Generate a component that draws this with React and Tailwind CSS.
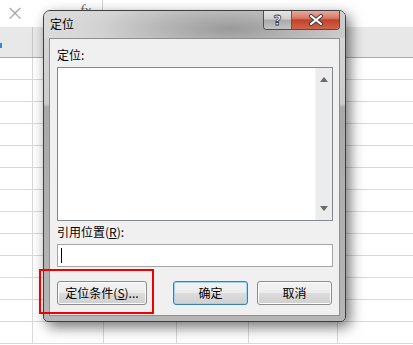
import React from 'react';

const cols = [33, 71, 73, 72, 89];
const rows = Array.from({ length: 13 });

function Sheet() {
  return (
    <div className="flex flex-col">
      {/* formula bar */}
      <div className="flex h-[27px] bg-white">
        <div className="flex w-[103px] items-start border-r border-[#d4d4d4] pl-[6px] text-[#a6a6a6]">
          <span className="mt-[3px] text-[18px] leading-none">×</span>
          <span className="ml-[56px] mt-[3px] font-['Liberation_Serif',serif] text-[15px] italic leading-none text-[#6a6a6a]">fx</span>
        </div>
        <div className="flex-1" />
      </div>
      {/* column header */}
      <div className="flex h-[31px] border-b border-[#ababab] bg-[#e8e8e8]">
        <div className="relative w-[33px] border-r border-[#c8c8c8]">
          <div className="absolute left-0 top-[16px] h-[5px] w-[2px] bg-[#2f8ad8]" />
        </div>
        <div className="flex-1" />
      </div>
      {rows.map((_, i) => (
        <div key={i} className="flex h-[22px] border-b border-[#d9d9d9] bg-white">
          {cols.map((w, j) => (
            <div key={j} className="shrink-0 border-r border-[#d9d9d9]" style={{ width: w }} />
          ))}
          <div className="flex-1" />
        </div>
      ))}
    </div>
  );
}

function WinButton({ children, width, focused, className = '' }) {
  return (
    <div
      className={
        'flex h-[24px] items-center justify-center rounded-[3px] border bg-[linear-gradient(180deg,#f3f3f3_0%,#ebebeb_50%,#dddddd_50%,#d0d0d0_100%)] text-[12px] leading-none text-black ' +
        (focused
          ? 'border-[#3c7fb1] shadow-[inset_0_0_0_1px_#9fd3f2]'
          : 'border-[#8c8c8c] shadow-[inset_0_0_0_1px_#fcfcfc]') +
        ' ' +
        className
      }
      style={{ width }}
    >
      {children}
    </div>
  );
}

function Dialog() {
  return (
    <div className="absolute left-[43px] top-[10px] flex h-[312px] w-[303px] flex-col rounded-b-[5px] rounded-t-[7px] border border-[#3e3e3e] bg-[linear-gradient(180deg,#dadada_0%,#cbcbcb_30%,#a9a9a9_31%,#b6b6b6_100%)] px-[5px] pb-[5px] shadow-[4px_5px_14px_rgba(0,0,0,0.55)]">
      {/* title bar */}
      <div className="relative -mx-[5px] flex h-[27px] shrink-0 items-start justify-between rounded-t-[6px] bg-[radial-gradient(ellipse_55%_140%_at_62%_65%,#9a9a9a_0%,#b9b9b9_45%,#d2d2d2_80%,#dadada_100%)] px-[5px]">
        <span className="mt-[5px] pl-[1px] text-[12px] leading-[16px] text-black">定位</span>
        <div className="flex h-[19px] overflow-hidden rounded-b-[4px] border border-t-0 border-[#4e4e4e]">
          <div className="flex w-[28px] items-center justify-center border-r border-[#5c5c5c] bg-[linear-gradient(180deg,#e6e6e6_0%,#cfcfcf_45%,#a9a9a9_50%,#c4c4c4_100%)]">
            <span className="font-['DejaVu_Sans',sans-serif] text-[14px] font-bold leading-none text-white [-webkit-text-stroke:0.8px_#3a3a3a]">?</span>
          </div>
          <div className="flex w-[47px] items-center justify-center bg-[linear-gradient(180deg,#e9a99b_0%,#d47a66_40%,#c2432b_50%,#d0624a_100%)]">
            <svg width="16" height="12" viewBox="0 0 16 12">
              <path d="M3 2 L13 10 M13 2 L3 10" stroke="#3b3b3b" strokeWidth="4" strokeLinecap="round" />
              <path d="M3 2 L13 10 M13 2 L3 10" stroke="#ffffff" strokeWidth="2.2" strokeLinecap="round" />
            </svg>
          </div>
        </div>
      </div>

      {/* client area */}
      <div className="flex flex-1 flex-col border border-[#8f8f8f] bg-[#f0f0f0] px-[7px] pb-[10px] pt-[8px]">
        <div className="h-[16px] text-[12px] leading-[16px] text-black">定位:</div>
        <div className="mt-[4px] flex h-[154px] w-[276px] border border-[#828790] bg-white">
          <div className="flex-1" />
          <div className="flex w-[17px] flex-col items-center justify-between border-l border-[#f4f4f4] bg-[#ececec] py-[9px]">
            <svg width="8" height="5" viewBox="0 0 8 5">
              <path d="M0 5 L4 0 L8 5 Z" fill="#6a6a6a" />
            </svg>
            <svg width="8" height="5" viewBox="0 0 8 5">
              <path d="M0 0 L8 0 L4 5 Z" fill="#6a6a6a" />
            </svg>
          </div>
        </div>
        <div className="mt-[3px] h-[16px] text-[12px] leading-[16px] text-black">
          引用位置(<span className="underline">R</span>):
        </div>
        <div className="mt-[4px] flex h-[23px] w-[276px] items-center border border-[#a5a5a5] bg-white pl-[3px]">
          <div className="h-[15px] w-[1px] bg-black" />
        </div>
        <div className="mt-[14px] flex">
          <WinButton width={90}>
            定位条件(<span className="underline">S</span>)...
          </WinButton>
          <WinButton width={75} focused className="ml-[26px]">
            确定
          </WinButton>
          <WinButton width={75} className="ml-[9px]">
            取消
          </WinButton>
        </div>
      </div>
    </div>
  );
}

export default function App() {
  return (
    <div className="relative h-[345px] w-[413px] overflow-hidden bg-white font-['Noto_Sans_CJK_SC','Noto_Sans',sans-serif]">
      <Sheet />
      <Dialog />
      {/* red annotation box */}
      <div className="absolute left-[39px] top-[269px] h-[45px] w-[115px] border-2 border-[#f00000]" />
    </div>
  );
}
